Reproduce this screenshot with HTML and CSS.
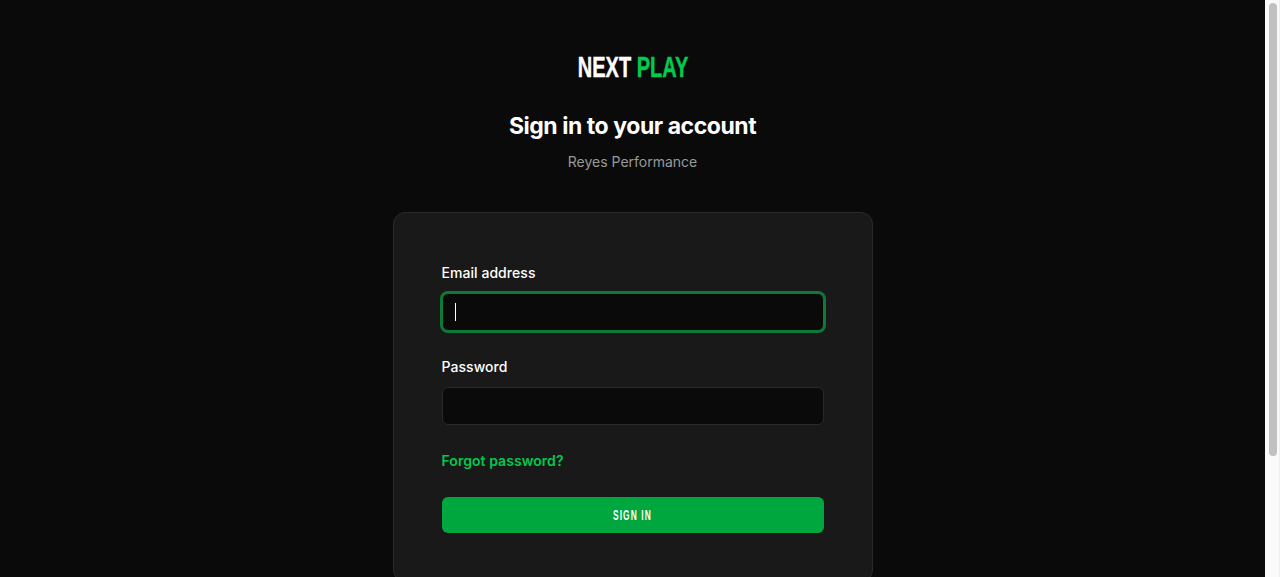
FILE: index.html
```html
<!DOCTYPE html>
<html lang="en">

<head>
  <meta charset="UTF-8">
  <title>Sign in - Next Play</title>
  <link rel="stylesheet" href="styles.css">
</head>

<body>
  <div class="page">
    <div class="logo">NEXT <span class="logo-accent">PLAY</span></div>
    <h1 class="title">Sign in to your account</h1>
    <p class="subtitle">Reyes Performance</p>

    <form class="card">
      <div class="field">
        <label class="field-label" for="email">Email address</label>
        <div class="input-wrap">
          <input class="field-input is-focused" type="email" id="email">
          <span class="caret"></span>
        </div>
      </div>
      <div class="field">
        <label class="field-label" for="password">Password</label>
        <div class="input-wrap">
          <input class="field-input" type="password" id="password">
        </div>
      </div>
      <a class="forgot" href="#">Forgot password?</a>
      <button class="submit" type="button"><span class="submit-text">SIGN IN</span></button>
    </form>
  </div>

  <div class="scrollbar">
    <div class="scrollbar-thumb"></div>
  </div>
</body>

</html>
```

FILE: styles.css
```css
body {
  margin: 0;
  background-color: #0a0a0a;
  font-family: Inter, "Noto Sans", sans-serif;
  color: #fff;
}

.page {
  display: flex;
  flex-direction: column;
  align-items: center;
  padding: 48px 15px 152px 0;
}

.scrollbar {
  position: fixed;
  top: 0;
  right: 0;
  bottom: 0;
  width: 15px;
  padding: 3px 3px 0 4px;
  box-sizing: border-box;
  background-color: #fafafa;
  border-right: 1px solid #efefef;
}

.scrollbar-thumb {
  width: 8px;
  height: 453px;
  background-color: #c1c1c1;
  border-radius: 4px;
}

.logo {
  margin-left: 1px;
  font-family: "Liberation Sans", sans-serif;
  font-size: 29px;
  font-weight: 700;
  line-height: 38px;
  white-space: nowrap;
  transform: scaleX(0.69);
  -webkit-text-stroke: 0.4px currentColor;
}

.logo-accent {
  color: #00cc50;
}

.title {
  margin: 24px 0 0;
  font-size: 23px;
  font-weight: 700;
  line-height: 32px;
  letter-spacing: -0.45px;
}

.subtitle {
  margin: 10px 0 0;
  font-size: 14px;
  line-height: 20px;
  color: #999;
}

.card {
  display: flex;
  flex-direction: column;
  align-items: stretch;
  width: 480px;
  box-sizing: border-box;
  margin-top: 40px;
  padding: 48px;
  background-color: #191919;
  border: 1px solid #2a2a2a;
  border-radius: 12px;
}

.field {
  margin-bottom: 24px;
}

.field-label {
  display: block;
  margin-bottom: 8px;
  font-size: 14px;
  font-weight: 500;
  line-height: 24px;
  letter-spacing: 0.05px;
}

.input-wrap {
  position: relative;
}

.field-input {
  display: block;
  width: 100%;
  height: 38px;
  box-sizing: border-box;
  background-color: #0a0a0a;
  border: 1px solid #2a2a2a;
  border-radius: 6px;
  outline: none;
}

.field-input.is-focused {
  border-color: #0e7a3a;
  box-shadow: 0 0 0 2px #0e7a3a;
}

.caret {
  position: absolute;
  left: 13px;
  top: 10px;
  width: 1px;
  height: 18px;
  background-color: #fff;
}

.forgot {
  font-size: 14px;
  font-weight: 600;
  line-height: 24px;
  letter-spacing: 0.05px;
  color: #00c950;
  text-decoration: none;
}

.submit {
  height: 36px;
  margin-top: 24px;
  background-color: #00a63e;
  border: none;
  border-radius: 6px;
  color: #fff;
  font-family: "Liberation Sans", sans-serif;
  font-size: 14px;
  font-weight: 700;
  letter-spacing: 1.8px;
}

.submit-text {
  display: inline-block;
  transform: scaleX(0.6);
}
```
